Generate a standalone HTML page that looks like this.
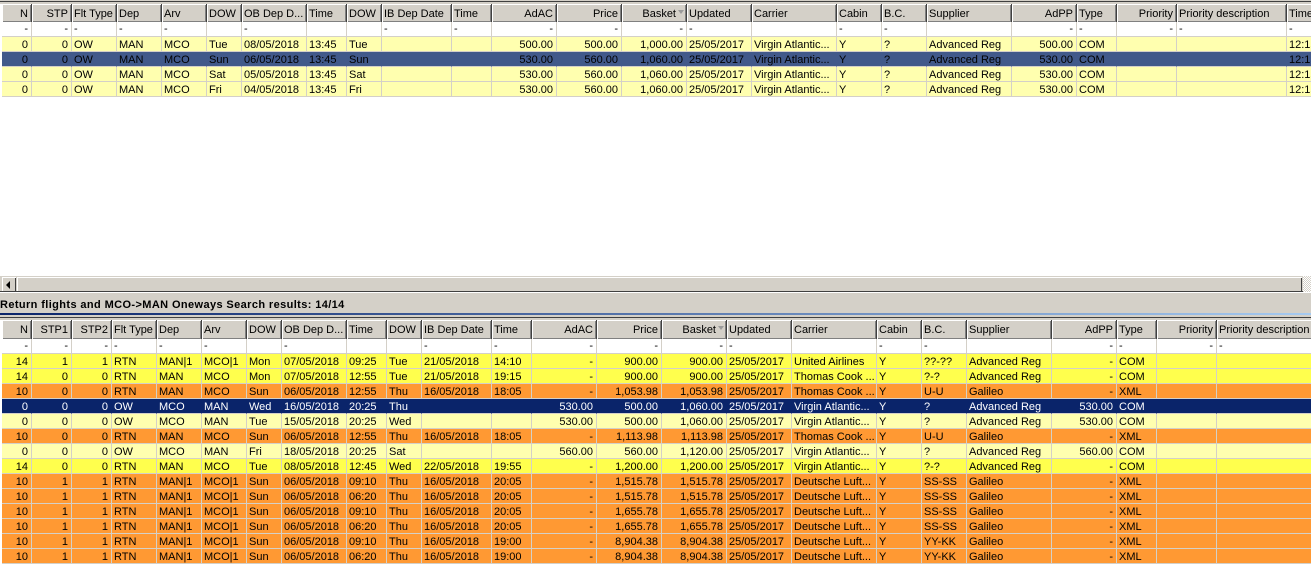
<!DOCTYPE html>
<html><head><meta charset="utf-8"><style>
html,body{margin:0;padding:0;width:1311px;height:564px;overflow:hidden;background:#fff}
body{position:relative;font:11px/14px "Liberation Sans",Arial,sans-serif;color:#000}
.g{position:absolute;left:0;width:1311px;overflow:hidden;background:#fff}
table{position:absolute;left:2px;border-collapse:separate;border-spacing:0;table-layout:fixed}
th,td{box-sizing:border-box;padding:0 3px 0 2px;white-space:nowrap;overflow:hidden;text-align:left;font-weight:normal}
th{height:18px;padding-top:3px;vertical-align:top;background:#d4d0c8;border-right:1px solid #404040;box-shadow:inset 1px 1px 0 #fff,inset -1px -1px 0 #808080;line-height:15px;position:relative}
#b th{height:19px}
td{height:15px;padding-top:3px;border-right:1px solid #d4d0c8;border-bottom:1px solid #d4d0c8;line-height:11px;vertical-align:top}
tr.f td{background:#fff;height:15px;padding-top:0;line-height:14px}
tr.p td{background:#ffffaf}
tr.y td{background:#ffff4d}
tr.o td{background:#ff9933}
tr.s1 td{background:#41598a;border-right-color:#41598a}
tr.s2 td{background:#0a246a;border-right-color:#0a246a;color:#fff}
#t tr>*:nth-child(1),#t tr>*:nth-child(2),#t tr>*:nth-child(12),#t tr>*:nth-child(13),#t tr>*:nth-child(14),#t tr>*:nth-child(20),#t tr>*:nth-child(22){text-align:right}
#b tr>*:nth-child(1),#b tr>*:nth-child(2),#b tr>*:nth-child(3),#b tr>*:nth-child(13),#b tr>*:nth-child(14),#b tr>*:nth-child(15),#b tr>*:nth-child(21),#b tr>*:nth-child(23){text-align:right}
.a{position:absolute;right:2px;top:6px;width:0;height:0;border-left:3px solid transparent;border-right:3px solid transparent;border-top:4px solid #9a9a9a}
th.k{padding-right:10px}
.line{position:absolute;left:0;width:1311px}
</style></head><body>

<div class="line" style="top:0;height:1px;background:#d4d0c8"></div>
<div class="line" style="top:1px;height:1px;background:#404040"></div>
<div class="line" style="top:2px;height:2px;background:#d4d0c8"></div>

<div class="g" style="top:4px;height:273px">
<table id="t" style="top:0;width:1325px">
<colgroup><col style="width:30px"><col style="width:40px"><col style="width:45px"><col style="width:45px"><col style="width:45px"><col style="width:35px"><col style="width:65px"><col style="width:40px"><col style="width:35px"><col style="width:70px"><col style="width:40px"><col style="width:65px"><col style="width:65px"><col style="width:65px"><col style="width:65px"><col style="width:85px"><col style="width:45px"><col style="width:45px"><col style="width:85px"><col style="width:65px"><col style="width:40px"><col style="width:60px"><col style="width:110px"><col style="width:40px"></colgroup>
<tr><th>N</th><th>STP</th><th>Flt Type</th><th>Dep</th><th>Arv</th><th>DOW</th><th>OB Dep D...</th><th>Time</th><th>DOW</th><th>IB Dep Date</th><th>Time</th><th>AdAC</th><th>Price</th><th class="k">Basket<span class="a"></span></th><th>Updated</th><th>Carrier</th><th>Cabin</th><th>B.C.</th><th>Supplier</th><th>AdPP</th><th>Type</th><th>Priority</th><th>Priority description</th><th>Time</th></tr>
<tr class="f"><td>-</td><td>-</td><td>-</td><td>-</td><td>-</td><td></td><td>-</td><td></td><td></td><td>-</td><td>-</td><td>-</td><td>-</td><td>-</td><td>-</td><td></td><td>-</td><td>-</td><td></td><td>-</td><td>-</td><td>-</td><td>-</td><td>-</td></tr>
<tr class="p"><td>0</td><td>0</td><td>OW</td><td>MAN</td><td>MCO</td><td>Tue</td><td>08/05/2018</td><td>13:45</td><td>Tue</td><td></td><td></td><td>500.00</td><td>500.00</td><td>1,000.00</td><td>25/05/2017</td><td>Virgin Atlantic...</td><td>Y</td><td>?</td><td>Advanced Reg</td><td>500.00</td><td>COM</td><td></td><td></td><td>12:15</td></tr>
<tr class="s1"><td>0</td><td>0</td><td>OW</td><td>MAN</td><td>MCO</td><td>Sun</td><td>06/05/2018</td><td>13:45</td><td>Sun</td><td></td><td></td><td>530.00</td><td>560.00</td><td>1,060.00</td><td>25/05/2017</td><td>Virgin Atlantic...</td><td>Y</td><td>?</td><td>Advanced Reg</td><td>530.00</td><td>COM</td><td></td><td></td><td>12:15</td></tr>
<tr class="p"><td>0</td><td>0</td><td>OW</td><td>MAN</td><td>MCO</td><td>Sat</td><td>05/05/2018</td><td>13:45</td><td>Sat</td><td></td><td></td><td>530.00</td><td>560.00</td><td>1,060.00</td><td>25/05/2017</td><td>Virgin Atlantic...</td><td>Y</td><td>?</td><td>Advanced Reg</td><td>530.00</td><td>COM</td><td></td><td></td><td>12:15</td></tr>
<tr class="p"><td>0</td><td>0</td><td>OW</td><td>MAN</td><td>MCO</td><td>Fri</td><td>04/05/2018</td><td>13:45</td><td>Fri</td><td></td><td></td><td>530.00</td><td>560.00</td><td>1,060.00</td><td>25/05/2017</td><td>Virgin Atlantic...</td><td>Y</td><td>?</td><td>Advanced Reg</td><td>530.00</td><td>COM</td><td></td><td></td><td>12:15</td></tr>
</table>
</div>

<div class="line" style="top:276px;height:1px;background:#d4d0c8"></div>
<div class="line" style="top:277px;height:14px;background:#d4d0c8"></div>
<div style="position:absolute;left:2px;top:277px;width:14px;height:15px;background:#d4d0c8;box-shadow:inset 1px 1px 0 #fff,inset -1px -1px 0 #404040"></div>
<div style="position:absolute;left:6px;top:281px;width:0;height:0;border-top:4px solid transparent;border-bottom:4px solid transparent;border-right:4px solid #000"></div>
<div style="position:absolute;left:17px;top:277px;width:1285px;height:15px;box-sizing:border-box;background:#d4d0c8;box-shadow:inset 1px 1px 0 #fff,inset -1px -1px 0 #404040"></div>
<div style="position:absolute;left:1303px;top:276px;width:8px;height:16px;background:repeating-conic-gradient(#d4d0c8 0 25%,#fff 0 50%) 0 0/2px 2px"></div>
<div style="position:absolute;left:0;top:291px;width:1303px;height:1px;background:#404040"></div>
<div class="line" style="top:292px;height:1px;background:#fff"></div>

<div class="line" style="top:293px;height:20px;background:#d4d0c8"></div>
<div style="position:absolute;left:0;top:297px;font:bold 11px/16px 'Liberation Sans',Arial,sans-serif;white-space:nowrap;letter-spacing:.39px">Return flights and MCO-&gt;MAN Oneways Search results: 14/14</div>
<div class="line" style="top:313px;height:2px;background:linear-gradient(90deg,#0a246a,#a6caf0 100%)"></div>
<div class="line" style="top:315px;height:2px;background:#d4d0c8"></div>
<div class="line" style="top:317px;height:1px;background:#404040"></div>
<div class="line" style="top:318px;height:2px;background:#d4d0c8"></div>

<div class="g" style="top:320px;height:244px">
<table id="b" style="top:0;width:1325px">
<colgroup><col style="width:30px"><col style="width:40px"><col style="width:40px"><col style="width:45px"><col style="width:45px"><col style="width:45px"><col style="width:35px"><col style="width:65px"><col style="width:40px"><col style="width:35px"><col style="width:70px"><col style="width:40px"><col style="width:65px"><col style="width:65px"><col style="width:65px"><col style="width:65px"><col style="width:85px"><col style="width:45px"><col style="width:45px"><col style="width:85px"><col style="width:65px"><col style="width:40px"><col style="width:60px"><col style="width:110px"></colgroup>
<tr><th>N</th><th>STP1</th><th>STP2</th><th>Flt Type</th><th>Dep</th><th>Arv</th><th>DOW</th><th>OB Dep D...</th><th>Time</th><th>DOW</th><th>IB Dep Date</th><th>Time</th><th>AdAC</th><th>Price</th><th class="k">Basket<span class="a"></span></th><th>Updated</th><th>Carrier</th><th>Cabin</th><th>B.C.</th><th>Supplier</th><th>AdPP</th><th>Type</th><th>Priority</th><th>Priority description</th></tr>
<tr class="f"><td>-</td><td>-</td><td>-</td><td>-</td><td>-</td><td>-</td><td></td><td>-</td><td></td><td></td><td>-</td><td>-</td><td>-</td><td>-</td><td>-</td><td>-</td><td></td><td>-</td><td>-</td><td></td><td>-</td><td>-</td><td>-</td><td>-</td></tr>
<tr class="y"><td>14</td><td>1</td><td>1</td><td>RTN</td><td>MAN|1</td><td>MCO|1</td><td>Mon</td><td>07/05/2018</td><td>09:25</td><td>Tue</td><td>21/05/2018</td><td>14:10</td><td>-</td><td>900.00</td><td>900.00</td><td>25/05/2017</td><td>United Airlines</td><td>Y</td><td>??-??</td><td>Advanced Reg</td><td>-</td><td>COM</td><td></td><td></td></tr>
<tr class="y"><td>14</td><td>0</td><td>0</td><td>RTN</td><td>MAN</td><td>MCO</td><td>Mon</td><td>07/05/2018</td><td>12:55</td><td>Tue</td><td>21/05/2018</td><td>19:15</td><td>-</td><td>900.00</td><td>900.00</td><td>25/05/2017</td><td>Thomas Cook ...</td><td>Y</td><td>?-?</td><td>Advanced Reg</td><td>-</td><td>COM</td><td></td><td></td></tr>
<tr class="o"><td>10</td><td>0</td><td>0</td><td>RTN</td><td>MAN</td><td>MCO</td><td>Sun</td><td>06/05/2018</td><td>12:55</td><td>Thu</td><td>16/05/2018</td><td>18:05</td><td>-</td><td>1,053.98</td><td>1,053.98</td><td>25/05/2017</td><td>Thomas Cook ...</td><td>Y</td><td>U-U</td><td>Galileo</td><td>-</td><td>XML</td><td></td><td></td></tr>
<tr class="s2"><td>0</td><td>0</td><td>0</td><td>OW</td><td>MCO</td><td>MAN</td><td>Wed</td><td>16/05/2018</td><td>20:25</td><td>Thu</td><td></td><td></td><td>530.00</td><td>500.00</td><td>1,060.00</td><td>25/05/2017</td><td>Virgin Atlantic...</td><td>Y</td><td>?</td><td>Advanced Reg</td><td>530.00</td><td>COM</td><td></td><td></td></tr>
<tr class="p"><td>0</td><td>0</td><td>0</td><td>OW</td><td>MCO</td><td>MAN</td><td>Tue</td><td>15/05/2018</td><td>20:25</td><td>Wed</td><td></td><td></td><td>530.00</td><td>500.00</td><td>1,060.00</td><td>25/05/2017</td><td>Virgin Atlantic...</td><td>Y</td><td>?</td><td>Advanced Reg</td><td>530.00</td><td>COM</td><td></td><td></td></tr>
<tr class="o"><td>10</td><td>0</td><td>0</td><td>RTN</td><td>MAN</td><td>MCO</td><td>Sun</td><td>06/05/2018</td><td>12:55</td><td>Thu</td><td>16/05/2018</td><td>18:05</td><td>-</td><td>1,113.98</td><td>1,113.98</td><td>25/05/2017</td><td>Thomas Cook ...</td><td>Y</td><td>U-U</td><td>Galileo</td><td>-</td><td>XML</td><td></td><td></td></tr>
<tr class="p"><td>0</td><td>0</td><td>0</td><td>OW</td><td>MCO</td><td>MAN</td><td>Fri</td><td>18/05/2018</td><td>20:25</td><td>Sat</td><td></td><td></td><td>560.00</td><td>560.00</td><td>1,120.00</td><td>25/05/2017</td><td>Virgin Atlantic...</td><td>Y</td><td>?</td><td>Advanced Reg</td><td>560.00</td><td>COM</td><td></td><td></td></tr>
<tr class="y"><td>14</td><td>0</td><td>0</td><td>RTN</td><td>MAN</td><td>MCO</td><td>Tue</td><td>08/05/2018</td><td>12:45</td><td>Wed</td><td>22/05/2018</td><td>19:55</td><td>-</td><td>1,200.00</td><td>1,200.00</td><td>25/05/2017</td><td>Virgin Atlantic...</td><td>Y</td><td>?-?</td><td>Advanced Reg</td><td>-</td><td>COM</td><td></td><td></td></tr>
<tr class="o"><td>10</td><td>1</td><td>1</td><td>RTN</td><td>MAN|1</td><td>MCO|1</td><td>Sun</td><td>06/05/2018</td><td>09:10</td><td>Thu</td><td>16/05/2018</td><td>20:05</td><td>-</td><td>1,515.78</td><td>1,515.78</td><td>25/05/2017</td><td>Deutsche Luft...</td><td>Y</td><td>SS-SS</td><td>Galileo</td><td>-</td><td>XML</td><td></td><td></td></tr>
<tr class="o"><td>10</td><td>1</td><td>1</td><td>RTN</td><td>MAN|1</td><td>MCO|1</td><td>Sun</td><td>06/05/2018</td><td>06:20</td><td>Thu</td><td>16/05/2018</td><td>20:05</td><td>-</td><td>1,515.78</td><td>1,515.78</td><td>25/05/2017</td><td>Deutsche Luft...</td><td>Y</td><td>SS-SS</td><td>Galileo</td><td>-</td><td>XML</td><td></td><td></td></tr>
<tr class="o"><td>10</td><td>1</td><td>1</td><td>RTN</td><td>MAN|1</td><td>MCO|1</td><td>Sun</td><td>06/05/2018</td><td>09:10</td><td>Thu</td><td>16/05/2018</td><td>20:05</td><td>-</td><td>1,655.78</td><td>1,655.78</td><td>25/05/2017</td><td>Deutsche Luft...</td><td>Y</td><td>SS-SS</td><td>Galileo</td><td>-</td><td>XML</td><td></td><td></td></tr>
<tr class="o"><td>10</td><td>1</td><td>1</td><td>RTN</td><td>MAN|1</td><td>MCO|1</td><td>Sun</td><td>06/05/2018</td><td>06:20</td><td>Thu</td><td>16/05/2018</td><td>20:05</td><td>-</td><td>1,655.78</td><td>1,655.78</td><td>25/05/2017</td><td>Deutsche Luft...</td><td>Y</td><td>SS-SS</td><td>Galileo</td><td>-</td><td>XML</td><td></td><td></td></tr>
<tr class="o"><td>10</td><td>1</td><td>1</td><td>RTN</td><td>MAN|1</td><td>MCO|1</td><td>Sun</td><td>06/05/2018</td><td>09:10</td><td>Thu</td><td>16/05/2018</td><td>19:00</td><td>-</td><td>8,904.38</td><td>8,904.38</td><td>25/05/2017</td><td>Deutsche Luft...</td><td>Y</td><td>YY-KK</td><td>Galileo</td><td>-</td><td>XML</td><td></td><td></td></tr>
<tr class="o"><td>10</td><td>1</td><td>1</td><td>RTN</td><td>MAN|1</td><td>MCO|1</td><td>Sun</td><td>06/05/2018</td><td>06:20</td><td>Thu</td><td>16/05/2018</td><td>19:00</td><td>-</td><td>8,904.38</td><td>8,904.38</td><td>25/05/2017</td><td>Deutsche Luft...</td><td>Y</td><td>YY-KK</td><td>Galileo</td><td>-</td><td>XML</td><td></td><td></td></tr>
</table>
</div>
</body></html>
